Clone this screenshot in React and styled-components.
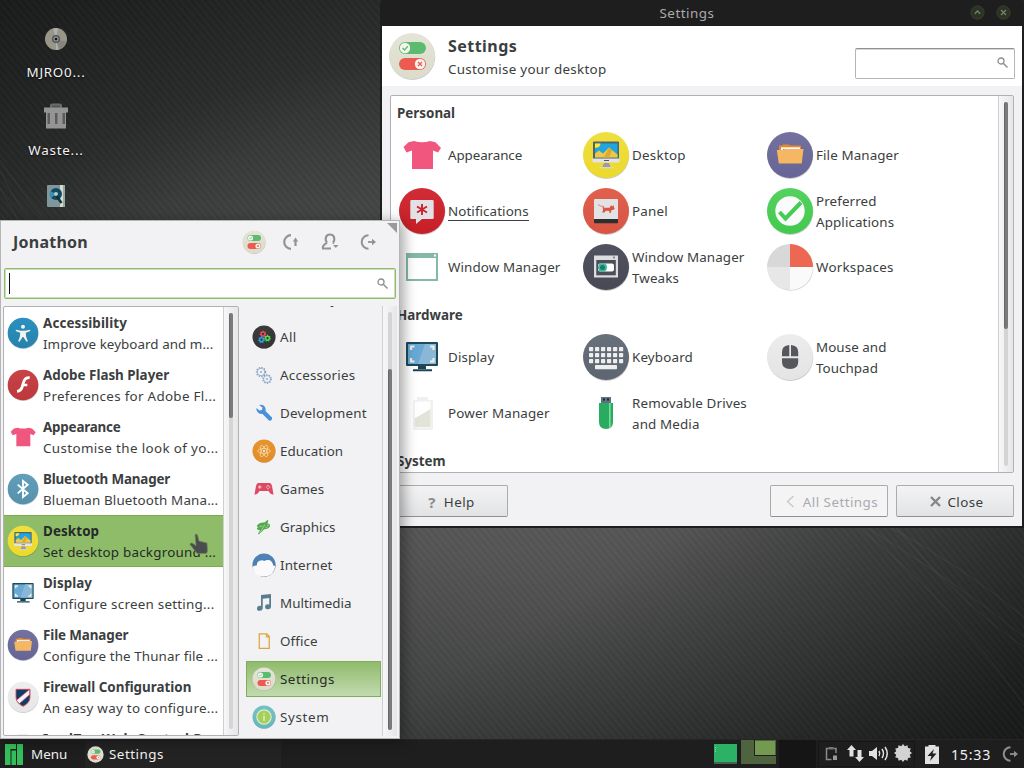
import React from 'react';
import styled, { createGlobalStyle, css } from 'styled-components';

const Global = createGlobalStyle`
  * { box-sizing: border-box; }
  html, body { margin: 0; padding: 0; overflow: hidden; background: #1e1e1e; }
  body { font-family: "Noto Sans", "Open Sans", sans-serif; font-size: 13.4px; color: #3b3e40; cursor: default; }
  svg { display: block; flex: none; }
`;

const Desktop = styled.div`
  position: relative;
  width: 1024px;
  height: 768px;
  overflow: hidden;
  background:
    repeating-linear-gradient(50deg, rgba(255,255,255,0.024) 0, rgba(0,0,0,0.04) 2.7px, rgba(255,255,255,0.024) 5.4px),
    linear-gradient(148deg, rgba(8,8,8,0.35) 0%, rgba(0,0,0,0) 22%, rgba(0,0,0,0) 68%, rgba(8,10,10,0.6) 100%),
    radial-gradient(ellipse 760px 460px at 520px 440px, #5b5b5b 0%, #555555 26%, #3f4040 62%, #2d2e2e 85%, #222323 120%);
`;

const Streaks = styled.svg`
  position: absolute;
  inset: 0;
`;

const Shortcuts = styled.div`
  width: 112px;
  padding-top: 24px;
  display: flex;
  flex-direction: column;
  align-items: center;
  color: #f2f2f2;
  position: relative;
`;

const Shortcut = styled.div`
  height: 78px;
  display: flex;
  flex-direction: column;
  align-items: center;
  gap: 8px;
  line-height: 21px;
  letter-spacing: 0.75px;
  text-shadow: 0 1px 2px rgba(0,0,0,0.8);
`;

/* ---------- window ---------- */
const Window = styled.section`
  position: absolute;
  left: 380px;
  top: 0;
  width: 644px;
  height: 528px;
  display: flex;
  flex-direction: column;
  background: #1e1e1e;
  padding: 0 2px 2px 2px;
  border-radius: 4px 4px 0 0;
`;

const TitleBar = styled.header`
  height: 26px;
  flex: none;
  display: flex;
  align-items: center;
  color: #a9abab;
  line-height: 26px;
  padding: 0 11px 2px 33px;
  gap: 11px;
`;

const Title = styled.div`
  flex: 1;
  text-align: center;
  letter-spacing: 0.5px;
  padding-top: 2px;
`;

const WindowHead = styled.div`
  height: 60px;
  flex: none;
  background: #fff;
  display: flex;
  align-items: center;
  padding: 0 7px 0 6px;
`;

const HeadText = styled.div`
  flex: 1;
  padding: 3px 0 0 12px;
`;

const Heading = styled.div`
  font-size: 16px;
  font-weight: 700;
  line-height: 23px;
  letter-spacing: ${p => p.$ls || 0}px;
`;

const SubHeading = styled.div`
  line-height: 23px;
  letter-spacing: 0.28px;
`;

const SearchBox = styled.div`
  width: 160px;
  height: 31px;
  margin-top: 14px;
  border: 1px solid #b4b5b6;
  border-top-color: #8e9091;
  box-shadow: inset 0 1px #d5d6d7;
  border-radius: 2px;
  background: #fff;
  display: flex;
  align-items: center;
  justify-content: flex-end;
  padding: 0 6px 0 0;
`;

const WindowBody = styled.div`
  flex: 1;
  min-height: 0;
  background: #f2f2f4;
  display: flex;
  flex-direction: column;
  padding: 9px 8px 9px 8px;
`;

const Panel = styled.div`
  height: ${p => p.$h}px;
  flex: none;
  width: ${p => (p.$w ? p.$w + 'px' : 'auto')};
  border: 1px solid #b0b1b3;
  border-radius: 2px;
  background: #fff;
  display: flex;
  overflow: hidden;
`;

const Scrolled = styled.div`
  flex: 1;
  min-width: 0;
  overflow: hidden;
`;

const Track = styled.div`
  width: 15px;
  flex: none;
  border-left: 1px solid #cfcfd1;
  background: linear-gradient(90deg, #f7f7f8, #e6e6e8);
  display: flex;
  justify-content: center;
  padding: 6px 0;
`;

const Trough = styled.div`
  width: 4px;
  border-radius: 2px;
  background: #d4d4d5;
  padding-top: ${p => p.$top || 0}px;
`;

const Thumb = styled.div`
  height: ${p => p.$h}px;
  border-radius: 2px;
  background: #77797b;
  border-left: 1px solid #68696b;
`;

const Group = styled.div`
  padding-top: ${p => (p.$first ? 6 : 9)}px;
`;

const GroupTitle = styled.div`
  font-weight: 700;
  line-height: 22px;
  padding-left: 6px;
  margin-bottom: 3px;
`;

const Grid = styled.div`
  display: grid;
  grid-template-columns: repeat(3, 184px);
  grid-auto-rows: 56px;
  padding-left: 7px;
`;

const GridItem = styled.div`
  display: flex;
  align-items: center;
  gap: 2px;
  line-height: 21px;
  white-space: pre-line;
`;

const Label = styled.span`
  letter-spacing: ${p => p.$ls || 0}px;
  padding-top: ${p => (p.$tall ? 2 : 0)}px;
  ${p => p.$underline && css`border-bottom: 1px solid #3b3e40; line-height: 17px; margin-top: 1px;`}
`;

const Actions = styled.div`
  display: flex;
  gap: 8px;
  margin-top: 12px;
`;

const Button = styled.div`
  width: 118px;
  height: 32px;
  border: 1px solid #a9abad;
  border-bottom-color: #8f9193;
  border-radius: 2px;
  background: ${p => (p.$off ? '#f4f4f5' : 'linear-gradient(#f3f3f4, #e2e3e4)')};
  color: ${p => (p.$off ? '#aaaab0' : '#3b3e40')};
  display: flex;
  align-items: center;
  justify-content: center;
  gap: ${p => p.$gap || 7}px;
  margin-right: ${p => (p.$push ? 'auto' : 0)};
  letter-spacing: 0.45px;
  padding: 1px 0 0 ${p => p.$shift || 0}px;
`;

const HelpMark = styled.b`
  color: #8a8c8e;
  font-size: 15px;
`;

/* ---------- application menu ---------- */
const Menu = styled.aside`
  position: absolute;
  left: 0;
  top: 220px;
  width: 400px;
  height: 519px;
  border: 1px solid #b5b5b7;
  background: #f2f2f4;
  box-shadow: 4px 2px 12px rgba(0,0,0,0.35);
  display: flex;
  flex-direction: column;
`;

const MenuHead = styled.div`
  height: 47px;
  flex: none;
  display: flex;
  align-items: center;
  padding: 0 21px 6px 12px;
`;

const UserName = styled(Heading)`
  flex: 1;
  padding-top: 2px;
`;

const HeadIcons = styled.div`
  display: flex;
  align-items: center;
  gap: 14px;
`;

const Grip = styled.svg`
  position: absolute;
  right: 1px;
  top: 2px;
`;

const MenuSearch = styled.div`
  height: 31px;
  margin: 0 3px;
  flex: none;
  border: 1px solid #8fbd66;
  box-shadow: inset 0 0 0 1px #cfdcc4;
  border-radius: 2px;
  background: #fff;
  display: flex;
  align-items: center;
  justify-content: space-between;
  padding: 0 7px 0 4px;
`;

const Caret = styled.i`
  width: 1px;
  height: 21px;
  background: #111;
`;

const MenuBody = styled.div`
  display: flex;
  margin-top: 7px;
  padding: 0 2px;
  height: 430px;
`;

const AppRow = styled.div`
  height: 52px;
  display: flex;
  gap: 4px;
  align-items: center;
  padding-left: 3px;
  line-height: 21px;
  white-space: nowrap;
  ${p => p.$active && css`
    background: #8fbc68;
    color: #25292a;
    box-shadow: inset 0 1px #7cab52, inset 0 -1px #7cab52;
  `}
`;

const AppText = styled.div`
  padding-top: 2px;
`;

const AppName = styled.div`
  font-weight: 700;
  letter-spacing: ${p => p.$ls || 0}px;
`;

const AppNote = styled.div`
  min-height: 21px;
  letter-spacing: ${p => p.$ls || 0}px;
`;

const Categories = styled.div`
  flex: 1;
  margin-left: 7px;
  overflow: hidden;
  padding-right: 1px;
`;

const CategoryShift = styled.div`
  margin-top: -25px;
`;

const Category = styled.div`
  height: 36px;
  margin-bottom: 2px;
  display: flex;
  align-items: center;
  gap: 4px;
  padding-left: 5px;
  border: 1px solid ${p => (p.$active ? '#7fae58' : 'transparent')};
  background: ${p => (p.$active ? 'linear-gradient(#90bb6c, #c3dab0)' : 'none')};
  color: ${p => (p.$active ? '#25292a' : '#3b3e40')};
  white-space: nowrap;
`;

const Blank = styled.span`
  width: 24px;
`;

const Pointer = styled.svg`
  position: absolute;
  left: 189px;
  top: 533px;
`;

/* ---------- taskbar ---------- */
const Taskbar = styled.footer`
  position: absolute;
  left: 0;
  top: 739px;
  width: 1024px;
  height: 29px;
  background: #1e1e1e;
  border-top: 1px solid #262626;
  display: flex;
  align-items: center;
  color: #f0f0f0;
  padding: 0 4px 0 5px;
`;

const MenuButton = styled.div`
  display: flex;
  align-items: center;
  gap: 8px;
  width: 80px;
`;

const Task = styled.div`
  display: flex;
  align-items: center;
  gap: 5px;
  height: 27px;
  width: 196px;
  padding-left: 2px;
  background: #232323;
  letter-spacing: 0.5px;
`;

const Spacer = styled.div`
  flex: 1;
`;

const Pager = styled.div`
  display: flex;
  align-self: stretch;
  margin-left: 3px;
`;

const Workspace = styled.div`
  width: 37px;
  height: 28px;
  background: #151515;
  margin-left: 2px;
`;

const Tray = styled.div`
  display: flex;
  align-items: center;
  gap: 5px;
  width: 97px;
  height: 26px;
  margin: 0 10px 0 2px;
  padding: 0 0 2px 5px;
  border: 1px solid #161616;
`;

const Clock = styled.div`
  font-size: 14.2px;
  letter-spacing: 0.75px;
  width: 45px;
  margin: 0 6px 0 12px;
`;

/* ---------- icon drawings (48 unit box) ---------- */
const Disc = ({ c, c2 }) => {
  const id = 'g' + c.slice(1);
  return (
    <>
      <defs><linearGradient id={id} x1="0" y1="0" x2="0" y2="1"><stop stopColor={c} /><stop offset="1" stopColor={c2 || c} /></linearGradient></defs>
      <circle cx="24.4" cy="25" r="22.9" fill="#000" opacity="0.2" />
      <circle cx="24" cy="24" r="23" fill={`url(#${id})`} />
    </>
  );
};

const star = (cx, cy, outer, inner, n) => {
  const pts = [];
  for (let i = 0; i < n * 2; i += 1) {
    const r = i % 2 ? inner : outer;
    const a = (Math.PI * i) / n;
    pts.push(`${(cx + r * Math.sin(a)).toFixed(2)},${(cy - r * Math.cos(a)).toFixed(2)}`);
  }
  return pts.join(' ');
};

const art = {
  toggles: <>
    <Disc c="#e4e4d8" c2="#dcdccb" />
    <rect x="11" y="10" width="27" height="12" rx="6" fill="#5dbb70" /><circle cx="17" cy="16" r="5.2" fill="#f4f4ee" />
    <path d="M14.5 16l2 2 3.3-3.8" stroke="#5dbb70" strokeWidth="1.3" fill="none" />
    <rect x="11" y="26" width="27" height="12" rx="6" fill="#ed5a4f" /><circle cx="32" cy="32" r="5.2" fill="#f4f4ee" />
    <path d="M30 30l4 4m0-4l-4 4" stroke="#ed5a4f" strokeWidth="1.3" />
  </>,
  shirt: <path d="M16 10 q8 2.500 16 0 l5.500 1.300 L43 17 L40 21.500 L35 19.500 V38 H14 V19.500 L8.500 21.500 L5.500 16 L10.500 11.300 Z" fill="#f1567f" />,
  desktop: <>
    <Disc c="#efdf3f" c2="#ecd92c" />
    <path d="M22 32h5l2 5h-9z" fill="#9c9ca0" /><rect x="17.500" y="36" width="14" height="1.300" fill="#d8d8d0" />
    <rect x="11" y="10.500" width="26" height="20" rx="1" fill="#51646d" /><path d="M10.500 27.500h27v3q0 1-1 1h-25q-1 0-1-1z" fill="#e3e3e3" />
    <rect x="13" y="12.500" width="22.500" height="14" fill="#1fa5e0" />
    <path d="M13 26.500v-4l4-3 4 3 6-6 8.500 7v3z" fill="#f2c542" /><path d="M27 16.500l-5 10h5l3-7z" fill="#dbab2f" />
    <path d="M13 12.500h5.500q0 4-5.500 4.500z" fill="#ffe72e" />
    <path d="M22 29.500h5" stroke="#555" strokeWidth="1" />
  </>,
  files: <>
    <Disc c="#73719f" c2="#676595" />
    <path d="M13 14.500h3l1-1h6l1 1h11v14H13z" fill="#e58a2c" /><rect x="15" y="16.300" width="19" height="8" fill="#fafafa" />
    <path d="M17 18.500h15" stroke="#999" strokeWidth="1.200" />
    <path d="M10.800 19h7l1-1h18.700l-1.800 14.500H12.800z" fill="#f5b763" />
  </>,
  notify: <>
    <Disc c="#d12c35" c2="#c71f28" />
    <path d="M13.500 13h21q1.200 0 1.200 1.200v16.600q0 1.200-1.200 1.200H24l-6 5v-5h-4.500q-1.200 0-1.200-1.200V14.200Q12.300 13 13.500 13z" fill="#e2e1e6" />
    <path d="M24 17v11M19 19.500l10 6M29 19.500l-10 6" stroke="#cb232d" strokeWidth="1.900" />
  </>,
  panel: <>
    <Disc c="#e0604e" c2="#d85542" />
    <rect x="12" y="12" width="24" height="24" rx="1" fill="#e3e2e4" /><path d="M12 32h24v3.500q0 .8-1 .8H13q-1 0-1-.8z" fill="#2d2e30" />
    <path d="M16 17.500q2 2 6 2" stroke="#e27b6c" strokeWidth=".9" fill="none" />
    <path d="M20.500 19.500l2 1.200h5l1.500-2.500 1.300 1 1.700-.9-.2 1.700.9 1.700-1.500 1.200-1.700.2-.7 2.800h-1.300l-.2-1.800-3.300-.3-1.700 1.600h-2.200l1-2.400z" fill="#dc5743" />
  </>,
  check: <>
    <Disc c="#54d25f" c2="#43c94e" /><circle cx="24" cy="24" r="14.700" fill="#fbfbfb" />
    <path d="M13.500 25l6 6.500L35 15.500" stroke="#45cc52" strokeWidth="4" fill="none" />
  </>,
  wm: <><rect x="9" y="11" width="30" height="26" fill="#fff" stroke="#84b8a9" strokeWidth="2" /><rect x="8" y="10" width="32" height="5" fill="#84b8a9" /><rect x="36" y="11.500" width="2" height="2" fill="#fff" /></>,
  tweaks: <>
    <Disc c="#51525f" c2="#484954" /><rect x="12" y="12.500" width="24" height="22" fill="#dcdddf" /><rect x="14.300" y="17" width="19.500" height="15.300" fill="#4b4d58" />
    <rect x="31" y="13.500" width="2" height="2" fill="#8a8b92" /><rect x="16" y="20.500" width="16" height="8" rx="2" fill="#fff" /><circle cx="20.500" cy="24.500" r="4.600" fill="#45b89e" /><circle cx="20.500" cy="24.500" r="2.500" fill="#1c7b68" />
  </>,
  spaces: <>
    <circle cx="24.600" cy="25" r="22.800" fill="#d6d6d8" /><path d="M24 1a23 23 0 0 0-23 23h23z" fill="#d8d8d8" /><path d="M24 1a23 23 0 0 1 23 23H24z" fill="#ed6852" />
    <path d="M1 24a23 23 0 0 0 23 23V24z" fill="#e7e7e7" /><path d="M24 47a23 23 0 0 0 23-23H24z" fill="#fafafa" />
  </>,
  display: <>
    <rect x="8" y="9" width="32" height="24" rx="1" fill="#1d4a5c" /><rect x="10" y="11" width="28" height="20" fill="#68a9d6" /><path d="M27 11h11v20H20z" fill="#8ab7d6" />
    <path d="M13 17v-3.500h3.500M32 13.500h3.500V17M35.500 25v3.500H32M16.500 28.500H13V25" stroke="#f1eee0" strokeWidth="2.200" fill="none" />
    <path d="M20 33h8v3H20zM15 36.300h19v2H15z" fill="#1a4455" />
  </>,
  keyboard: <>
    <Disc c="#68707c" c2="#5d6570" />
    {[14, 20, 26].map(y => [7, 13, 19, 25, 31, 37].map(x => <rect key={x + '-' + y} x={x} y={y} width="4.200" height="4.200" rx=".7" fill="#eeeeee" />))}
    <rect x="13" y="32" width="22" height="4.200" rx=".7" fill="#eee" />
  </>,
  mouse: <>
    <Disc c="#ececec" c2="#e4e4e4" />
    <path d="M23.300 12v11.200H16V19q0-6.500 7.300-7zM25 12v11.200h7.200V19q0-6.500-7.200-7zM16 25.200h16.200V29q0 7-8.100 7T16 29z" fill="#55575a" />
  </>,
  battery: <><path d="M19 8h11v3h3.500q1.500 0 1.500 1.500v27q0 1.500-1.500 1.500h-17Q15 41 15 39.500v-27Q15 11 16.500 11H19z" fill="#f0f0f0" /><rect x="16.500" y="12.500" width="16" height="26" fill="#fefefe" /><path d="M16.500 29.500l16-9.500v18h-16z" fill="#e3e4d9" /></>,
  usb: <><rect x="19" y="8" width="10" height="7" fill="#5f7180" /><path d="M21 9.500h2v2h-2zM25 9.500h2v2h-2z" fill="#223" /><path d="M17 14h14v19q0 7-7 7t-7-7z" fill="#2aac60" /><path d="M27 14h1.600v24l-1.600 1z" fill="#7fdc9f" /></>,
  access: <>
    <Disc c="#2b91be" c2="#2582ad" /><circle cx="24" cy="14.500" r="3" fill="#f4f2ec" />
    <path d="M13.500 19l7 1.800h7l7-1.800.4 2-6.700 2.500.5 6 2.600 7-2 .8L24.500 30h-1l-4.800 7.300-2-.8 2.600-7 .5-6L13 21z" fill="#f4f2ec" />
  </>,
  flash: <><Disc c="#c94347" c2="#bc383c" /><path d="M34 13q-7-.5-9 6.500l-1.500 5q-2 8.500-8.500 9" stroke="#fff" strokeWidth="4.200" fill="none" /><path d="M22 24h8.500" stroke="#fff" strokeWidth="3.800" /></>,
  bluetooth: <><Disc c="#629fbb" c2="#5690ad" /><path d="M16 17.500l15 13L24 36V12l7 5.500-15 13" stroke="#fff" strokeWidth="2.800" fill="none" /></>,
  firewall: <>
    <Disc c="#eeeeee" c2="#e6e6e6" /><path d="M13.500 12.500h21V24q0 9-10.500 14-10.500-5-10.500-14z" fill="#0e3e66" stroke="#e0455f" strokeWidth="1.300" />
    <path d="M14 29L34 12.500v8L18.500 34z" fill="#f4f4f4" stroke="#d33b54" />
  </>,
  plain: <Disc c="#f0f0f0" c2="#e7e7e7" />,
  all: <>
    <Disc c="#3b3b3b" c2="#343434" />
    {[[22, 18, '#f0475a'], [31, 26.5, '#4bdc53'], [19, 29.5, '#2ba4ea']].map(([x, y, c]) => (
      <g key={c}><polygon points={star(x, y, 7.6, 5, 7)} fill={c} /><circle cx={x} cy={y} r="2.300" fill="#363636" /></g>
    ))}
  </>,
  gears: <g fill="none" stroke="#7799c0"><circle cx="18" cy="18" r="7.500" strokeWidth="1.400" /><circle cx="18" cy="18" r="9.200" strokeWidth="2.200" strokeDasharray="2.600 2.800" /><circle cx="30" cy="32" r="7" strokeWidth="1.400" /><circle cx="30" cy="32" r="8.600" strokeWidth="2.200" strokeDasharray="2.600 2.800" /><circle cx="18" cy="18" r="1" strokeWidth="2" /><circle cx="30" cy="32" r="1" strokeWidth="2" /></g>,
  wrench: <path d="M14 8q8-2 12 4 2 4 1 8l13 13q1 3-1 5t-5 1L21 26q-6 1-10-4-3-4-2-8l6 5 5-1 1-5z" fill="#4a90d9" />,
  atom: <><Disc c="#e8942f" c2="#e08c27" /><g fill="none" stroke="#f7d8a8" strokeWidth="1.600"><ellipse cx="24" cy="24" rx="5" ry="12.500" transform="rotate(30 24 24)" /><ellipse cx="24" cy="24" rx="5" ry="12.500" transform="rotate(-30 24 24)" /><ellipse cx="24" cy="24" rx="12.500" ry="5" /></g><circle cx="24" cy="24" r="2" fill="#fff" /></>,
  games: <><path d="M12 12h24q3 1 4 6l3 17q-5 1-8-4l-2-3H15l-2 3q-3 5-8 4l3-17q1-5 4-6z" fill="#dc4a64" /><path d="M12 20h7M15.500 16.500v7" stroke="#f6dfe3" strokeWidth="1.800" /><path d="M32 16v3M32 22v2.500M28.500 20h2M34 20h2.500" stroke="#f6dfe3" strokeWidth="2" /></>,
  graphics: <><path d="M10 21q5-7 15-6l6-5 1.500.5L31 17q6 1 5 5-1 5-9 6-5 1-6 4l-8 7-1-1 4-8q-6 0-6-3 0-2 3-2-4-1-3-4z" fill="#53aa4c" /><path d="M15 23l6-1M26 19l-10 16M30 21l4-1M27 25l4-1" stroke="#f2f2f4" strokeWidth="1" /></>,
  internet: <><Disc c="#4f84b8" c2="#4878aa" /><path d="M1.500 27q5-3 8-2 0-9 8-10 4-1 7 1 4-3 9-2 7 1 9 11l4 1q-2 20-22.500 21t-22.500-20z" fill="#fafafa" /></>,
  music: <path d="M18 8l20-2v25q0 5-6 5.500t-6-4.500q0-5 5.500-5.500 1.500 0 3 .5V14l-13 1.500V34q0 5-6 5.500T10 35q0-5 5.500-5.500 1.200 0 2.500.5z" fill="#587c90" />,
  office: <path d="M14.500 9.500h15l5 5v24h-20zM29 9.500v6h6" fill="none" stroke="#dda53f" strokeWidth="2.500" />,
  system: <><Disc c="#74c1c6" c2="#68b5bb" /><circle cx="24" cy="24" r="15.500" fill="#d8edc9" /><circle cx="24" cy="24" r="13" fill="#a5ce5b" /><path d="M24 16v2.500M24 21v11" stroke="#e7f6c8" strokeWidth="2.600" /></>,
};

const Icon = ({ name, size }) => <svg width={size} height={size} viewBox="0 0 48 48">{art[name]}</svg>;

const Lens = () => (
  <svg width="11" height="12" viewBox="0 0 11 12" fill="none" stroke="#8b8d8f"><circle cx="4" cy="4" r="3" strokeWidth="1.300" /><path d="M6.500 6.500l4 4" strokeWidth="1.500" /></svg>
);

const TitleDot = ({ d }) => (
  <svg width="15" height="15" viewBox="0 0 15 15"><circle cx="7.500" cy="7.500" r="6.700" fill="#2b3322" stroke="#3a4230" strokeWidth=".8" /><path d={d} stroke="#77806f" strokeWidth="1.300" fill="none" /></svg>
);

const LogoutIcon = ({ color }) => (
  <svg width="18" height="18" viewBox="0 0 18 18" fill="none" stroke={color}><path d="M8.500 2.200A6.800 6.800 0 0 0 8.500 15.800" strokeWidth="2" /><path d="M8 9h5" strokeWidth="1.800" /><path d="M12 5.800L16 9l-4 3.200z" fill={color} stroke="none" /></svg>
);

const personal = [
  ['shirt', 'Appearance', -0.1], ['desktop', 'Desktop', 0.25], ['files', 'File Manager', 0.1],
  ['notify', 'Notifications', 0.08], ['panel', 'Panel', 0.2], ['check', 'Preferred\nApplications', 0.1],
  ['wm', 'Window Manager', 0.1], ['tweaks', 'Window Manager\nTweaks', 0.1], ['spaces', 'Workspaces', 0.2],
];
const hardware = [
  ['display', 'Display', 0.1], ['keyboard', 'Keyboard', 0.15], ['mouse', 'Mouse and\nTouchpad', 0.05],
  ['battery', 'Power Manager', 0.15], ['usb', 'Removable Drives\nand Media', 0.13],
];
const apps = [
  ['access', 'Accessibility', 0.12, 'Improve keyboard and m...', 0.05],
  ['flash', 'Adobe Flash Player', 0, 'Preferences for Adobe Fl...', 0.3],
  ['shirt', 'Appearance', -0.2, 'Customise the look of yo...', 0.36],
  ['bluetooth', 'Bluetooth Manager', -0.17, 'Blueman Bluetooth Mana...', 0.15],
  ['desktop', 'Desktop', 0.1, 'Set desktop background ...', 0.23],
  ['display', 'Display', 0.05, 'Configure screen setting...', 0.24],
  ['files', 'File Manager', -0.1, 'Configure the Thunar file ...', 0.1],
  ['firewall', 'Firewall Configuration', 0, 'An easy way to configure...', 0.28],
  ['plain', 'IcedTea Web Control P...', 0.5],
];
const categories = [
  [null, 'Recently Used', 0.6], ['all', 'All', 0.4], ['gears', 'Accessories', 0.24], ['wrench', 'Development', 0.22], ['atom', 'Education', 0.07],
  ['games', 'Games', 0.1], ['graphics', 'Graphics', 0], ['internet', 'Internet', 0.15], ['music', 'Multimedia', 0], ['office', 'Office', 0.1],
  ['toggles', 'Settings', 0.5], ['system', 'System', 0.65],
];

const Items = ({ list }) => (
  <Grid>
    {list.map(([icon, text, ls]) => (
      <GridItem key={text}>
        <Icon name={icon} size={48} />
        <Label $ls={ls} $tall={text.includes('\n')} $underline={text === 'Notifications'}>{text}</Label>
      </GridItem>
    ))}
  </Grid>
);

export default function App() {
  return (
    <>
      <Global />
      <Desktop>
        <Streaks width="1024" height="768" fill="none" stroke="#fff">
          <path d="M0 160Q20 190 44 220M0 170Q14 200 30 220M0 188l18 32M858 527Q950 600 1024 705M866 527q90 55 158 110M890 527q80 45 134 90M895 527q70 80 129 120" strokeOpacity="0.06" />
        </Streaks>
        <Shortcuts>
          <Shortcut>
            <svg width="30" height="30" viewBox="0 0 30 30"><circle cx="15" cy="15" r="11" fill="#989589" /><path d="M15 15L12 4.500A11 11 0 0 1 17 4.200zM15 15l3 10.500a11 11 0 0 1-3 .5z" fill="#aeb0ad" /><path d="M15 15l10.500 3A11 11 0 0 1 18 25.500z" fill="#85857d" /><circle cx="15" cy="15" r="4" fill="#50555a" /><circle cx="15" cy="15" r="2.500" fill="#aaa" /><circle cx="15" cy="15" r="1.500" fill="#151515" /></svg>
            MJRO0...
          </Shortcut>
          <Shortcut>
            <svg width="30" height="30" viewBox="0 0 30 30"><path d="M10 6V3.500q0-1 1-1h8q1 0 1 1V6" stroke="#6b6b6b" strokeWidth="2" fill="#555" /><path d="M3 5.500h24v5h-2v16H5v-16H3z" fill="#949494" /><path d="M6.500 11h2.500v11H6.500zM14 11h2.500v11H14zM21.500 11H24v11h-2.500z" fill="#5c5c5c" /></svg>
            Waste...
          </Shortcut>
          <Shortcut>
            <svg width="30" height="30" viewBox="0 0 30 30"><rect x="6" y="5" width="18" height="22" rx="1" fill="#7f969b" /><rect x="19" y="5" width="3" height="22" fill="#d8d9c9" /><rect x="22" y="5" width="2" height="22" fill="#8fa8a8" /><circle cx="15" cy="14" r="6" fill="#124b60" /><path d="M15 14L9.500 11A6 6 0 0 0 10 18z" fill="#3b8fb0" /><circle cx="15" cy="14" r="2" fill="#b9cdd0" /><path d="M15.500 16l5 7" stroke="#12313d" strokeWidth="2.500" /></svg>
          </Shortcut>
        </Shortcuts>

        <Window>
          <TitleBar>
            <Title>Settings</Title>
            <TitleDot d="M4.800 8.800L7.500 6 10.200 8.800" />
            <TitleDot d="M5 5l5 5m0-5l-5 5" />
          </TitleBar>
          <WindowHead>
            <Icon name="toggles" size={48} />
            <HeadText>
              <Heading $ls={0.45}>Settings</Heading>
              <SubHeading>Customise your desktop</SubHeading>
            </HeadText>
            <SearchBox><Lens /></SearchBox>
          </WindowHead>
          <WindowBody>
            <Panel $h={378}>
              <Scrolled>
                <Group $first><GroupTitle>Personal</GroupTitle><Items list={personal} /></Group>
                <Group><GroupTitle>Hardware</GroupTitle><Items list={hardware} /></Group>
                <Group><GroupTitle>System</GroupTitle></Group>
              </Scrolled>
              <Track><Trough><Thumb $h={227} /></Trough></Track>
            </Panel>
            <Actions>
              <Button $push $gap={8} $shift={5}><HelpMark>?</HelpMark>Help</Button>
              <Button $off $gap={8} $shift={6}>
                <svg width="9" height="13" viewBox="0 0 9 13"><path d="M7.500 1L1.500 6.500l6 5.500" fill="none" stroke="#c9c9cc" strokeWidth="1.400" /></svg>
                All Settings
              </Button>
              <Button $gap={6} $shift={4}>
                <svg width="11" height="11" viewBox="0 0 11 11"><path d="M1 1l9 9m0-9l-9 9" stroke="#85878a" strokeWidth="2.400" /></svg>
                Close
              </Button>
            </Actions>
          </WindowBody>
        </Window>

        <Taskbar>
          <MenuButton>
            <svg width="18" height="21" viewBox="0 0 18 21"><path d="M0 0h11v5H5.500v16H0zM6.500 6.500H11V21H6.500zM12 0H18v21h-6z" fill="#34be5b" /></svg>
            Menu
          </MenuButton>
          <Task><Icon name="toggles" size={17} />Settings</Task>
          <Spacer />
          <svg width="24" height="20" viewBox="0 0 24 20"><rect width="23" height="18" fill="#2cb266" /><path d="M0 19h23" stroke="#557a62" strokeWidth="1.500" /><path d="M1.500 3v5" stroke="#7be08f" strokeDasharray="1 1" /></svg>
          <Pager>
            <svg width="36" height="28" viewBox="0 0 36 28"><rect width="35" height="24" fill="#50633f" /><path d="M13.500 0v15.500H35" stroke="#1e1e1e" fill="none" /><rect x="14" y="1" width="20" height="14" fill="#739a50" /></svg>
            <Workspace />
          </Pager>
          <Tray>
            <svg width="18" height="15" viewBox="0 0 18 15" fill="none" stroke="#8b8b8b" strokeWidth="1.500"><path d="M4.500 2.500H2.500v11H7.500M9.500 2.500h2.500V7" /><path d="M4.500 1h5v2.500h-5z" fill="#777" stroke="none" /><path d="M9 9.500h4V14H9z" fill="#999" stroke="none" /></svg>
            <svg width="17" height="17" viewBox="0 0 17 17" fill="#e2e2e2"><path d="M4.500 0L9 5H6.500v6.500h-4V5H0zM12.500 17L8 12h2.500V5h4v7H17z" /></svg>
            <svg width="20" height="15" viewBox="0 0 20 15" fill="none" stroke="#e2e2e2"><path d="M0 5h3l5-4v13l-5-4H0z" fill="#e2e2e2" stroke="none" /><path d="M10 5q1.500 2.500 0 5" strokeWidth="1.500" /><path d="M13 3q3 4.500 0 9" strokeWidth="1.500" /><path d="M16 1q4.500 6.500 0 13" strokeWidth="1.500" /></svg>
            <svg width="18" height="18" viewBox="0 0 18 18"><polygon points={star(9, 9, 9, 7, 12)} fill="#d2d2d2" /></svg>
          </Tray>
          <svg width="14" height="19" viewBox="0 0 14 19"><path d="M3.500 0h7v1.500H14V19H0V1.500h3.500z" fill="#e0e0e0" /><path d="M9 4L2.500 11h4L5 16l6.500-7.500h-4z" fill="#1e1e1e" /></svg>
          <Clock>15:33</Clock>
          <LogoutIcon color="#8f8f8f" />
        </Taskbar>

        <Menu>
          <MenuHead>
            <UserName $ls={0.25}>Jonathon</UserName>
            <HeadIcons>
              <Icon name="toggles" size={24} />
              <svg width="27" height="18" viewBox="0 0 27 18" fill="none" stroke="#919395"><path d="M11 2.200A6.800 6.800 0 0 0 11 15.800" strokeWidth="2.200" /><path d="M15.500 13V7" strokeWidth="2.200" /><path d="M12.800 8.500l2.700-4 2.700 4z" fill="#919395" stroke="none" /></svg>
              <svg width="25" height="18" viewBox="0 0 25 18" fill="none" stroke="#919395" strokeWidth="2.100"><path d="M6 9.500Q4 7 5 4q1-2.500 4-2.500t4 2.500q1 3-1 5.500M6 9.500L2.500 12.500q-1 1-.5 3h8M12 9.500l1 1" /><path d="M12 12h5.500l-2.750 3z" fill="#919395" stroke="none" /></svg>
              <LogoutIcon color="#919395" />
            </HeadIcons>
          </MenuHead>
          <Grip width="11" height="11"><path d="M0 0h10v10z" fill="#97999b" /></Grip>
          <MenuSearch><Caret /><Lens /></MenuSearch>
          <MenuBody>
            <Panel $w={236} $h={430}>
              <Scrolled>
                {apps.map(([icon, name, nameLs, note, noteLs]) => (
                  <AppRow key={name} $active={name === 'Desktop'}>
                    <Icon name={icon} size={32} />
                    <AppText>
                      <AppName $ls={nameLs}>{name}</AppName>
                      <AppNote $ls={noteLs}>{note}</AppNote>
                    </AppText>
                  </AppRow>
                ))}
              </Scrolled>
              <Track><Trough><Thumb $h={105} /></Trough></Track>
            </Panel>
            <Categories>
              <CategoryShift>
                {categories.map(([icon, name, ls]) => (
                  <Category key={name} $active={name === 'Settings'}>
                    {icon ? <Icon name={icon} size={24} /> : <Blank />}
                    <Label $ls={ls}>{name}</Label>
                  </Category>
                ))}
              </CategoryShift>
            </Categories>
            <Track><Trough $top={57}><Thumb $h={361} /></Trough></Track>
          </MenuBody>
        </Menu>

        <Pointer width="20" height="22" viewBox="0 0 20 22"><path d="M6 1.500q1.500-1 2.500.5l1.500 6 8 2 .5 8-1 2.500H8L1 11.500q0-2 2-1.500l4 2.500z" fill="#4a4d4f" stroke="#6f8b58" strokeWidth=".8" /></Pointer>
      </Desktop>
    </>
  );
}
